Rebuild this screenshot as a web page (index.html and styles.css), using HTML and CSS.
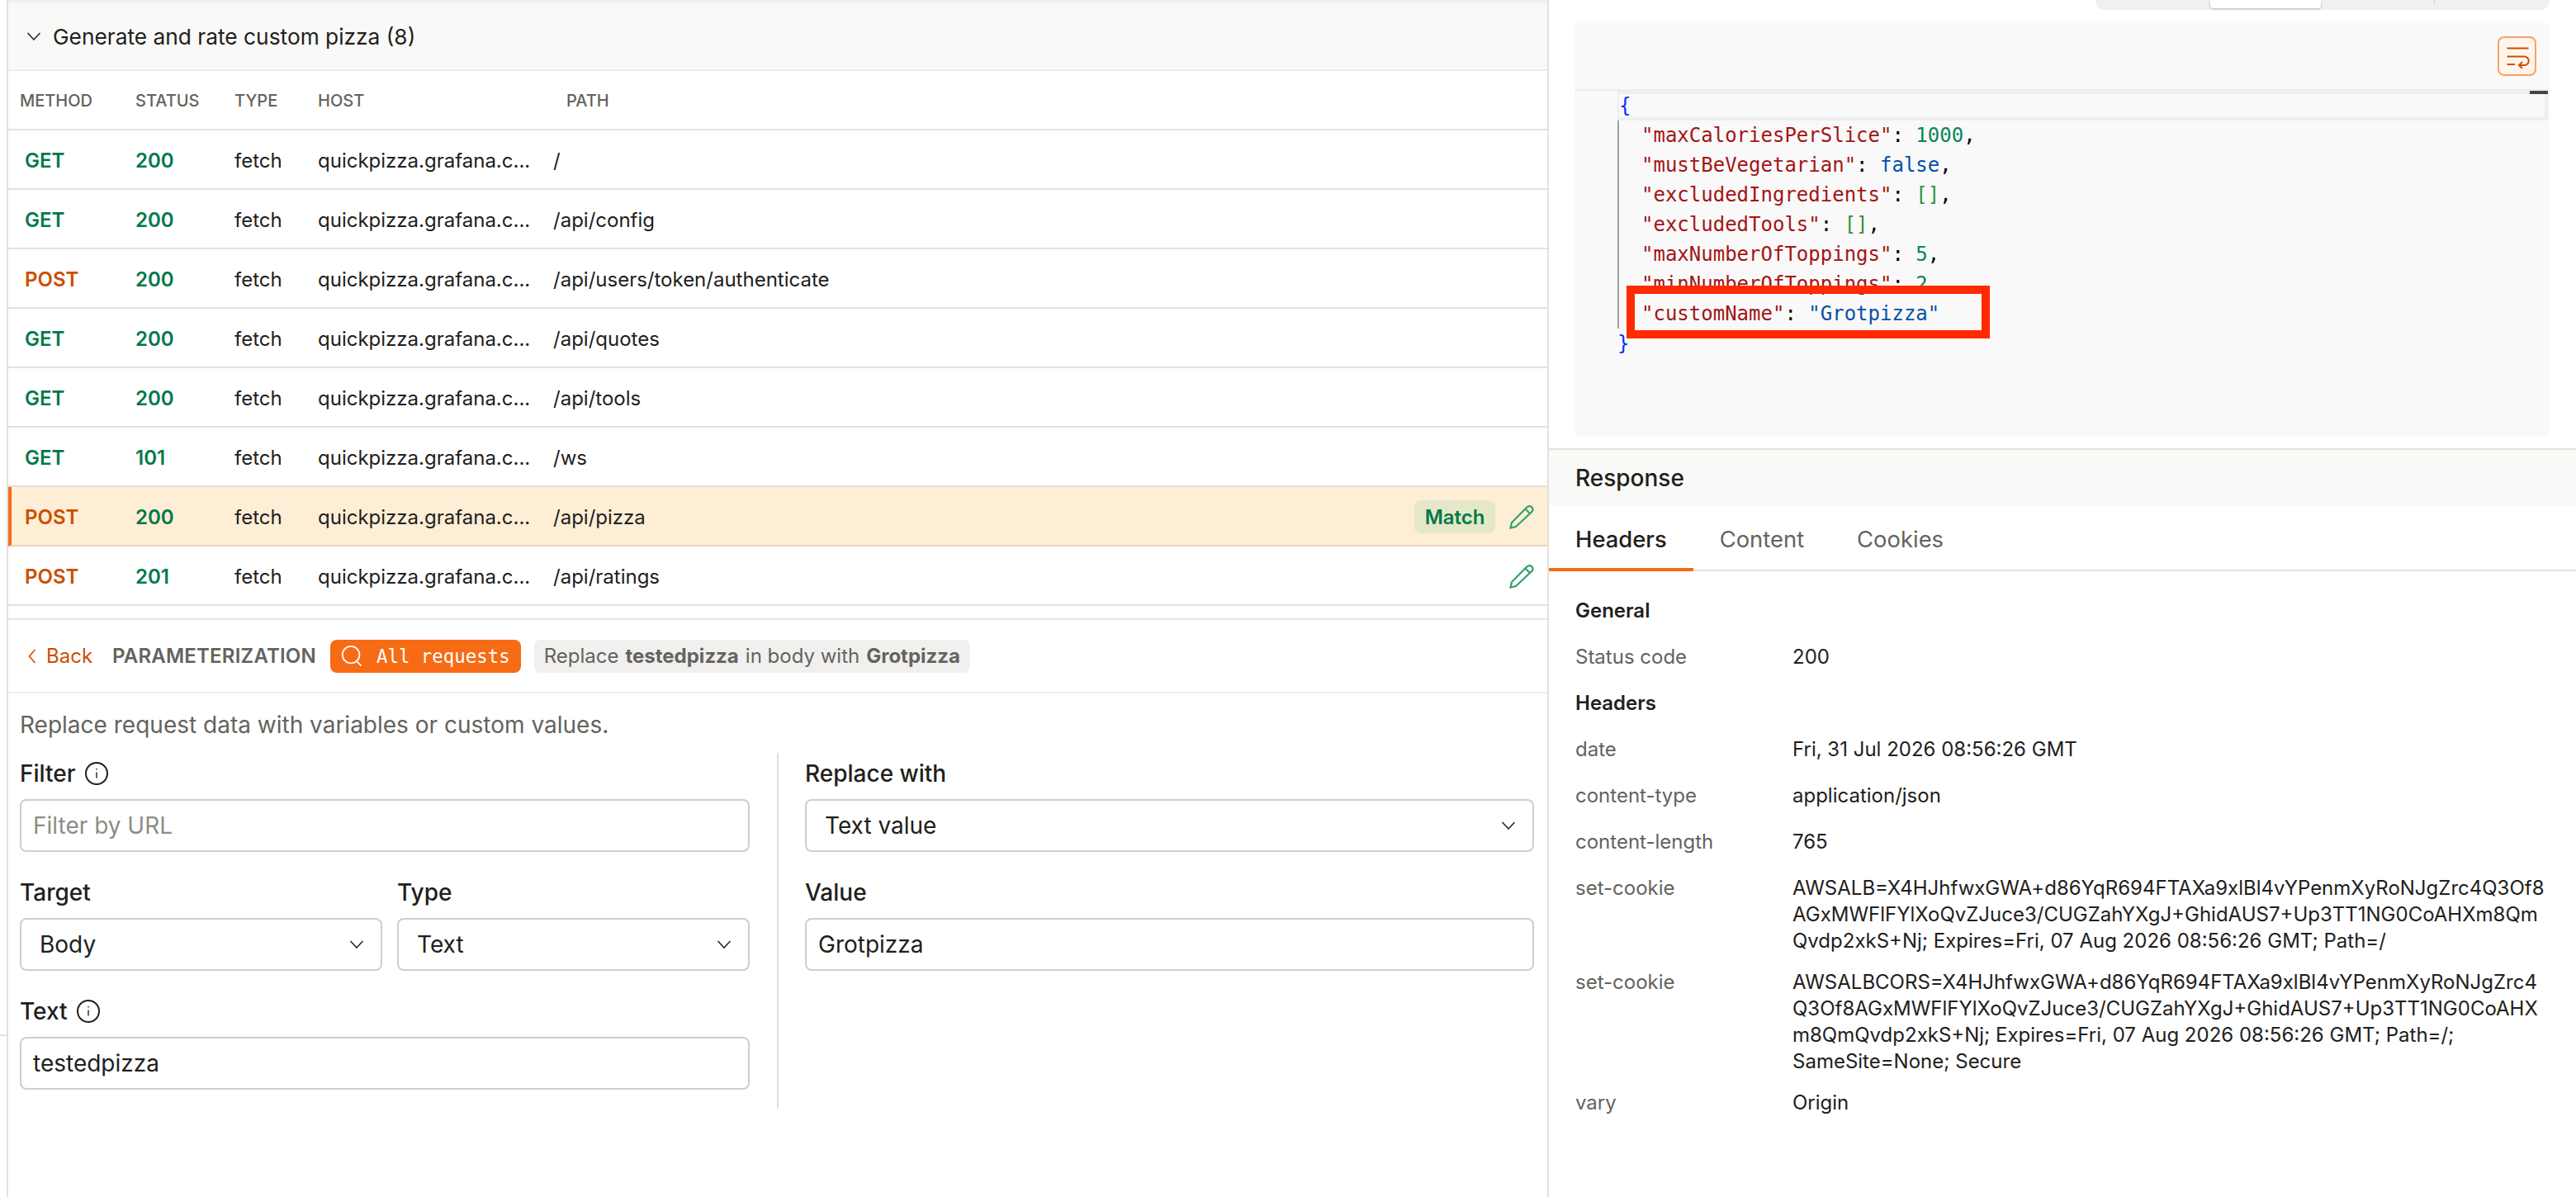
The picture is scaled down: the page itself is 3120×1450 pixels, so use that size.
FILE: index.html
```html
<!DOCTYPE html>
<html lang="en">
<head>
    <meta charset="UTF-8">
    <title>Generator</title>
    <link rel="stylesheet" href="styles.css">
</head>
<body>
    <div class="left-panel">
        <div class="group-header">
            <svg class="chevron" viewBox="0 0 18 10"><path d="M1.500 1 9 9l7.500-8"/></svg>
            <span>Generate and rate custom pizza (8)</span>
        </div>

        <div class="table-row table-head">
            <span>METHOD</span>
            <span>STATUS</span>
            <span>TYPE</span>
            <span>HOST</span>
            <span class="path-head">PATH</span>
        </div>
        <div class="table-row">
            <span class="method get">GET</span><span class="status">200</span><span>fetch</span><span>quickpizza.grafana.c...</span><span>/</span>
        </div>
        <div class="table-row">
            <span class="method get">GET</span><span class="status">200</span><span>fetch</span><span>quickpizza.grafana.c...</span><span>/api/config</span>
        </div>
        <div class="table-row">
            <span class="method post">POST</span><span class="status">200</span><span>fetch</span><span>quickpizza.grafana.c...</span><span>/api/users/token/authenticate</span>
        </div>
        <div class="table-row">
            <span class="method get">GET</span><span class="status">200</span><span>fetch</span><span>quickpizza.grafana.c...</span><span>/api/quotes</span>
        </div>
        <div class="table-row">
            <span class="method get">GET</span><span class="status">200</span><span>fetch</span><span>quickpizza.grafana.c...</span><span>/api/tools</span>
        </div>
        <div class="table-row">
            <span class="method get">GET</span><span class="status">101</span><span>fetch</span><span>quickpizza.grafana.c...</span><span>/ws</span>
        </div>
        <div class="table-row active">
            <span class="method post">POST</span><span class="status">200</span><span>fetch</span><span>quickpizza.grafana.c...</span><span>/api/pizza</span>
            <span class="row-actions">
                <span class="match-badge">Match</span>
                <svg class="pencil" viewBox="0 0 30 30"><path d="M1.500 28.500 3 22 20.500 4.200C23 1.500 26 1.500 27.500 3.500c1.500 2 1.200 4-.5 5.800L8 27ZM19.500 5.500l6 6"/></svg>
            </span>
        </div>
        <div class="table-row">
            <span class="method post">POST</span><span class="status">201</span><span>fetch</span><span>quickpizza.grafana.c...</span><span>/api/ratings</span>
            <span class="row-actions">
                <svg class="pencil" viewBox="0 0 30 30"><path d="M1.500 28.500 3 22 20.500 4.200C23 1.500 26 1.500 27.500 3.500c1.500 2 1.200 4-.5 5.800L8 27ZM19.500 5.500l6 6"/></svg>
            </span>
        </div>

        <div class="rule-toolbar">
            <span class="back-link">
                <svg viewBox="0 0 10 20"><path d="M8.500 2 1.500 10l7 8"/></svg>
                Back
            </span>
            <span class="toolbar-title">PARAMETERIZATION</span>
            <span class="scope-badge">
                <svg viewBox="0 0 30 30"><circle cx="14" cy="13" r="11"/><path d="m21.500 21.500 6 6"/></svg>
                All requests
            </span>
            <span class="summary-badge">Replace <b>testedpizza</b> in body with <b>Grotpizza</b></span>
        </div>

        <div class="rule-form">
            <p class="rule-desc">Replace request data with variables or custom values.</p>
            <div class="form-columns">
                <div class="form-col">
                    <div class="field">
                        <label>Filter <svg class="info" viewBox="0 0 30 30"><circle cx="15" cy="15" r="13"/><path class="info-mark" d="M15 13.500v7M15 9v1.500"/></svg></label>
                        <input type="text" placeholder="Filter by URL">
                    </div>
                    <div class="field-pair">
                        <div class="field">
                            <label>Target</label>
                            <div class="select-box">Body <svg viewBox="0 0 18 10"><path d="M1.500 1 9 9l7.500-8"/></svg></div>
                        </div>
                        <div class="field">
                            <label>Type</label>
                            <div class="select-box">Text <svg viewBox="0 0 18 10"><path d="M1.500 1 9 9l7.500-8"/></svg></div>
                        </div>
                    </div>
                    <div class="field">
                        <label>Text <svg class="info" viewBox="0 0 30 30"><circle cx="15" cy="15" r="13"/><path class="info-mark" d="M15 13.500v7M15 9v1.500"/></svg></label>
                        <input type="text" value="testedpizza">
                    </div>
                </div>
                <div class="form-col right-col">
                    <div class="field">
                        <label>Replace with</label>
                        <div class="select-box">Text value <svg viewBox="0 0 18 10"><path d="M1.500 1 9 9l7.500-8"/></svg></div>
                    </div>
                    <div class="field">
                        <label>Value</label>
                        <input type="text" value="Grotpizza">
                    </div>
                </div>
            </div>
        </div>
    </div>

    <div class="right-panel">
        <div class="view-switch">
            <span class="switch-item"></span>
            <span class="switch-item selected"></span>
            <span class="switch-item"></span>
            <span class="switch-item"></span>
        </div>

        <div class="code-panel">
            <div class="code-toolbar">
                <span class="wrap-button">
                    <svg viewBox="0 0 30 30"><path d="M2.500 5.500h26M2.500 15.500h21a5.200 5.200 0 0 1 0 10.500H17M21 22l-4 4 4 4M2.500 25h9.500"/></svg>
                </span>
            </div>
            <div class="code-body">
                <div class="code-line current"><span class="brace">{</span></div>
                <div class="code-indent">
                    <div class="code-line"><span class="key">"maxCaloriesPerSlice"</span>: <span class="num">1000</span>,</div>
                    <div class="code-line"><span class="key">"mustBeVegetarian"</span>: <span class="str">false</span>,</div>
                    <div class="code-line"><span class="key">"excludedIngredients"</span>: <span class="arr">[]</span>,</div>
                    <div class="code-line"><span class="key">"excludedTools"</span>: <span class="arr">[]</span>,</div>
                    <div class="code-line"><span class="key">"maxNumberOfToppings"</span>: <span class="num">5</span>,</div>
                    <div class="code-line"><span class="key">"minNumberOfToppings"</span>: <span class="num">2</span>,</div>
                    <div class="code-line"><span class="key">"customName"</span>: <span class="str">"Grotpizza"</span></div>
                </div>
                <div class="code-line"><span class="brace">}</span></div>
                <div class="ruler-mark"></div>
                <div class="red-box"></div>
            </div>
        </div>

        <div class="response-title">Response</div>
        <div class="tabs">
            <span class="tab selected">Headers</span>
            <span class="tab">Content</span>
            <span class="tab">Cookies</span>
        </div>
        <div class="response-body">
            <h4>General</h4>
            <div class="kv"><span class="kv-name">Status code</span><span>200</span></div>
            <h4>Headers</h4>
            <div class="kv"><span class="kv-name">date</span><span>Fri, 31 Jul 2026 08:56:26 GMT</span></div>
            <div class="kv"><span class="kv-name">content-type</span><span>application/json</span></div>
            <div class="kv"><span class="kv-name">content-length</span><span>765</span></div>
            <div class="kv"><span class="kv-name">set-cookie</span><span>AWSALB=X4HJhfwxGWA+d86YqR694FTAXa9xlBl4vYPenmXyRoNJgZrc4Q3Of8<br>AGxMWFlFYlXoQvZJuce3/CUGZahYXgJ+GhidAUS7+Up3TT1NG0CoAHXm8Qm<br>Qvdp2xkS+Nj; Expires=Fri, 07 Aug 2026 08:56:26 GMT; Path=/</span></div>
            <div class="kv"><span class="kv-name">set-cookie</span><span>AWSALBCORS=X4HJhfwxGWA+d86YqR694FTAXa9xlBl4vYPenmXyRoNJgZrc4<br>Q3Of8AGxMWFlFYlXoQvZJuce3/CUGZahYXgJ+GhidAUS7+Up3TT1NG0CoAHX<br>m8QmQvdp2xkS+Nj; Expires=Fri, 07 Aug 2026 08:56:26 GMT; Path=/;<br>SameSite=None; Secure</span></div>
            <div class="kv"><span class="kv-name">vary</span><span>Origin</span></div>
        </div>
    </div>
</body>
</html>
```

FILE: styles.css
```css
* {
    box-sizing: border-box;
}

body {
    position: relative;
    display: flex;
    height: 1450px;
    margin: 0;
    padding-left: 8px;
    overflow: hidden;
    background-color: #ffffff;
    color: #21201c;
    font-family: Inter, "Liberation Sans", sans-serif;
    font-size: 24px;
}

/* bit of the window behind, sticking out left of the panel */
body::before {
    content: "";
    position: absolute;
    top: 1253px;
    left: 0;
    width: 8px;
    height: 2px;
    background-color: #e2e1de;
}

svg {
    fill: none;
    stroke: currentColor;
}

/* left side */

.left-panel {
    width: 1868px;
    flex-shrink: 0;
    padding-top: 4px;
    border-left: 2px solid #e2e1de;
    border-right: 2px solid #e2e1de;
    background: linear-gradient(#f1f0ee, #f1f0ee) top / 100% 4px no-repeat;
}

.group-header {
    display: flex;
    align-items: center;
    gap: 14px;
    height: 82px;
    padding-left: 22px;
    border-bottom: 2px solid #ececea;
    background-color: #f9f9f8;
    font-size: 26.3px;
}

.chevron {
    width: 18px;
    height: 10px;
    stroke-width: 1.5;
}

.table-row {
    display: grid;
    grid-template-columns: 140px 120px 101px 285px 1fr auto;
    align-items: center;
    height: 72px;
    padding-top: 2px;
    padding-left: 14px;
    padding-right: 16px;
    border-bottom: 2px solid #e2e1de;
    white-space: nowrap;
}

.table-head {
    color: #63635e;
    font-size: 20px;
    font-weight: 500;
}

.path-head {
    padding-left: 16px;
}

.table-row .method {
    padding-left: 6px;
    font-weight: 600;
}

.method.get {
    color: #00794a;
}

.method.post {
    color: #cc4e00;
}

.status {
    color: #00794a;
    font-weight: 600;
}

.table-row.active {
    padding-left: 10px;
    border-left: 4px solid #f76b15;
    border-bottom-color: #e6d6bd;
    background-color: #feeed6;
}

.row-actions {
    display: flex;
    align-items: center;
    gap: 17px;
}

.match-badge {
    display: flex;
    align-items: center;
    height: 40px;
    padding: 0 12.5px;
    border-radius: 8px;
    background-color: #e4e8c8;
    color: #00794a;
    font-weight: 600;
}

.pencil {
    width: 30px;
    height: 30px;
    stroke: #30a46c;
    stroke-width: 2.2;
}

.rule-toolbar {
    display: flex;
    align-items: center;
    gap: 16px;
    height: 91px;
    margin-top: 15px;
    padding-left: 24px;
    border-top: 2px solid #e6e5e2;
    border-bottom: 2px solid #eeeeec;
}

.back-link {
    display: flex;
    align-items: center;
    gap: 12px;
    padding-right: 8px;
    color: #cc4e00;
}

.back-link svg {
    width: 10px;
    height: 20px;
    stroke-width: 1.6;
}

.toolbar-title {
    margin-right: 1px;
    color: #63635e;
    font-weight: 600;
    letter-spacing: 0.2px;
}

.scope-badge {
    display: flex;
    align-items: center;
    gap: 16px;
    height: 40px;
    padding: 0 13px 0 12px;
    border-radius: 8px;
    background-color: #f76b15;
    color: #ffffff;
    font-family: "DejaVu Sans Mono", monospace;
    font-size: 22.4px;
}

.scope-badge svg {
    width: 28px;
    height: 28px;
    stroke-width: 2;
}

.summary-badge {
    display: flex;
    align-items: center;
    gap: 8px;
    height: 40px;
    padding: 0 12px;
    border-radius: 8px;
    background-color: #f1f0ee;
    color: #63635e;
}

.rule-form {
    padding: 22px 14px 0;
}

.rule-desc {
    margin: 0 0 18px;
    color: #63635e;
    font-size: 28px;
    line-height: 32px;
}

.form-columns {
    display: flex;
}

.form-col {
    width: 919px;
    height: 431px;
    padding-top: 12px;
    padding-right: 33px;
    border-right: 2px solid #e2e1de;
}

.right-col {
    width: 915px;
    padding-left: 32px;
    padding-right: 0;
    border-right: none;
}

.field {
    margin-bottom: 36px;
}

.field-pair {
    display: grid;
    grid-template-columns: 439px 427px;
    gap: 18px;
}

label {
    display: flex;
    align-items: center;
    gap: 10px;
    height: 26px;
    margin-bottom: 18px;
    font-size: 28px;
    font-weight: 500;
}

.info {
    width: 30px;
    height: 30px;
    flex-shrink: 0;
    stroke-width: 2;
}

.info-mark {
    stroke-width: 1.4;
}

input, .select-box {
    display: flex;
    align-items: center;
    justify-content: space-between;
    width: 100%;
    height: 64px;
    padding: 0 14px;
    border: 2px solid #cfceca;
    border-radius: 8px;
    background-color: #ffffff;
    color: #21201c;
    font-family: inherit;
    font-size: 28px;
}

.select-box {
    padding: 0 20px 0 22px;
}

.select-box svg {
    width: 18px;
    height: 10px;
    stroke-width: 1.5;
}

input::placeholder {
    color: #8d8d86;
    opacity: 1;
}

/* right side */

.right-panel {
    position: relative;
    flex-grow: 1;
    min-width: 0;
}

.view-switch {
    display: flex;
    width: 550px;
    height: 12px;
    margin-left: 662px;
    border-radius: 0 0 10px 10px;
    background-color: #f0f0ee;
}

.switch-item {
    width: 139px;
    height: 6px;
    border-right: 1px solid #d5d4d0;
}

.switch-item:first-child, .switch-item:last-child, .switch-item.selected {
    border-right: none;
}

.switch-item.selected {
    width: 134px;
    height: 10px;
    border-radius: 0 0 4px 4px;
    background-color: #ffffff;
    box-shadow: 0 1px 3px rgba(0, 0, 0, 0.25);
}

.code-panel {
    height: 500px;
    margin: 16px 32px 15px 31px;
    background-color: #f9f9f9;
}

.code-toolbar {
    display: flex;
    justify-content: flex-end;
    height: 82px;
    padding: 16px 16px 0 0;
    border-bottom: 2px solid #ececec;
}

.wrap-button {
    display: flex;
    align-items: center;
    justify-content: center;
    width: 47px;
    height: 48px;
    border: 2px solid #f5a26a;
    border-radius: 8px;
    background-color: #fff5ec;
    color: #cc4e00;
}

.wrap-button svg {
    width: 30px;
    height: 30px;
    stroke-width: 2;
}

.code-body {
    position: relative;
    padding-left: 52px;
    font-family: "DejaVu Sans Mono", monospace;
    font-size: 24px;
    color: #000000;
}

.code-line {
    height: 36px;
    line-height: 36px;
    white-space: pre;
}

.code-line.current {
    margin-right: 2px;
    border: 4px solid #eeeeee;
    border-left-width: 2px;
    line-height: 28px;
}

.code-indent {
    padding-left: 27px;
    border-left: 2px solid #a0a0a0;
}

.key {
    color: #a31515;
}

.num {
    color: #098658;
}

.str {
    color: #0451a5;
}

.arr {
    color: #319331;
}

.brace {
    color: #0431fa;
}

.ruler-mark {
    position: absolute;
    top: 0;
    right: 2px;
    width: 22px;
    height: 4px;
    background-color: #444444;
}

.red-box {
    position: absolute;
    top: 236px;
    left: 63px;
    width: 440px;
    height: 64px;
    border: 10px solid #ff2a00;
}

.response-title {
    display: flex;
    align-items: center;
    height: 69px;
    padding-left: 32px;
    border-top: 2px solid #e2e1de;
    background-color: #f9f9f8;
    font-size: 28px;
    font-weight: 500;
}

.tabs {
    display: flex;
    height: 80px;
    border-bottom: 2px solid #e2e1de;
}

.tab {
    height: 80px;
    padding: 26px 32px 0;
    color: #63635e;
    font-size: 27.4px;
    line-height: 30px;
}

.tab.selected {
    border-bottom: 4px solid #f76b15;
    color: #21201c;
    font-weight: 500;
}

.response-body {
    padding: 32px 32px 0;
}

.response-body h4 {
    margin: 0 0 24px;
    font-size: 24px;
    font-weight: 600;
    line-height: 32px;
}

.kv {
    display: flex;
    min-height: 38px;
    margin-bottom: 18px;
    line-height: 32px;
}

.kv-name {
    width: 263px;
    flex-shrink: 0;
    color: #63635e;
}
```
